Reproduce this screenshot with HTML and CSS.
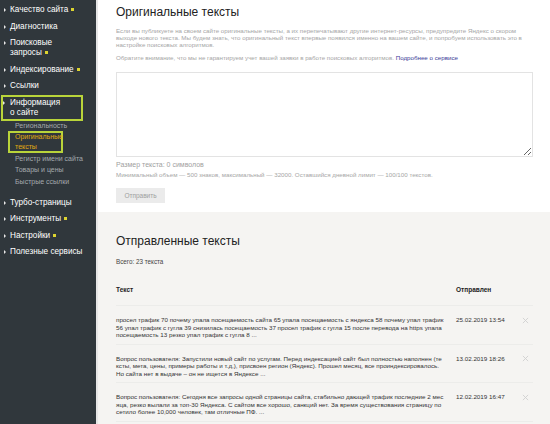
FILE: index.html
```html
<!DOCTYPE html>
<html lang="ru">
<head>
<meta charset="utf-8">
<title>Оригинальные тексты</title>
<link rel="stylesheet" href="styles.css">
</head>
<body>
<div class="app">
  <nav class="side">
    <ul class="menu">
      <li class="item"><div class="lbl">Качество сайта<span class="dot"></span></div></li>
      <li class="item"><div class="lbl">Диагностика</div></li>
      <li class="item"><div class="lbl">Поисковые<br>запросы<span class="dot"></span></div></li>
      <li class="item"><div class="lbl">Индексирование<span class="dot"></span></div></li>
      <li class="item"><div class="lbl">Ссылки</div></li>
      <li class="item">
        <div class="lbl hl">Информация<br>о сайте</div>
        <ul class="sub">
          <li class="sub-item">Региональность</li>
          <li class="sub-item active hl2">Оригинальные<br>тексты</li>
          <li class="sub-item">Регистр имени сайта</li>
          <li class="sub-item">Товары и цены</li>
          <li class="sub-item">Быстрые ссылки</li>
        </ul>
      </li>
      <li class="item"><div class="lbl">Турбо-страницы</div></li>
      <li class="item"><div class="lbl">Инструменты<span class="dot"></span></div></li>
      <li class="item"><div class="lbl">Настройки<span class="dot"></span></div></li>
      <li class="item"><div class="lbl">Полезные сервисы</div></li>
    </ul>
  </nav>
  <main class="main">
    <section class="top">
      <h1 class="title">Оригинальные тексты</h1>
      <p class="intro">Если вы публикуете на своем сайте оригинальные тексты, а их перепечатывают другие интернет-ресурсы, предупредите Яндекс о скором выходе нового текста. Мы будем знать, что оригинальный текст впервые появился именно на вашем сайте, и попробуем использовать это в настройке поисковых алгоритмов.</p>
      <p class="note">Обратите внимание, что мы не гарантируем учет вашей заявки в работе поисковых алгоритмов. <a class="link" href="#">Подробнее о сервисе</a></p>
      <textarea class="field"></textarea>
      <div class="size">Размер текста: 0 символов</div>
      <div class="limit">Минимальный объем — 500 знаков, максимальный — 32000. Оставшийся дневной лимит — 100/100 текстов.</div>
      <button class="btn" type="button">Отправить</button>
    </section>
    <section class="sent">
      <h2 class="title">Отправленные тексты</h2>
      <div class="total">Всего: 23 текста</div>
      <div class="table">
        <div class="row head">
          <div class="c-text">Текст</div>
          <div class="c-date">Отправлен</div>
          <div class="c-x"></div>
        </div>
        <div class="row">
          <div class="c-text">просел трафик 70 почему упала посещаемость сайта 65 упала посещаемость с яндекса 58 почему упал трафик 56 упал трафик с гугла 39 снизилась посещаемость 37 просел трафик с гугла 15 после перевода на https упала посещаемость 13 резко упал трафик с гугла 8 ...</div>
          <div class="c-date">25.02.2019 13:54</div>
          <div class="c-x"><svg class="x" viewBox="0 0 8 8"><path d="M1 1L7 7M7 1L1 7"/></svg></div>
        </div>
        <div class="row">
          <div class="c-text">Вопрос пользователя: Запустили новый сайт по услугам. Перед индексацией сайт был полностью наполнен (тексты, мета, цены, примеры работы и т.д.), присвоен регион (Яндекс). Прошел месяц, все проиндексировалось. Но сайта нет в выдаче – он не ищется в Яндексе ...</div>
          <div class="c-date">13.02.2019 18:26</div>
          <div class="c-x"><svg class="x" viewBox="0 0 8 8"><path d="M1 1L7 7M7 1L1 7"/></svg></div>
        </div>
        <div class="row">
          <div class="c-text">Вопрос пользователя: Сегодня все запросы одной страницы сайта, стабильно дающей трафик последние 2 месяца, резко вылали за топ-30 Яндекса. С сайтом все хорошо, санкций нет. За время существования страницу посетило более 10,000 человек, там отличные ПФ. ...</div>
          <div class="c-date">12.02.2019 16:47</div>
          <div class="c-x"><svg class="x" viewBox="0 0 8 8"><path d="M1 1L7 7M7 1L1 7"/></svg></div>
        </div>
      </div>
    </section>
  </main>
</div>
</body>
</html>
```
FILE: styles.css
```css
* { box-sizing: border-box; }
html, body { margin: 0; padding: 0; }
body {
  width: 550px;
  height: 424px;
  overflow: hidden;
  font-family: "Liberation Sans", Arial, sans-serif;
  background: #fff;
}
.app { display: flex; height: 424px; }

/* sidebar */
.side {
  width: 96px;
  flex: 0 0 96px;
  background: #30373c;
  padding-top: 2px;
}
.menu, .sub { list-style: none; margin: 0; padding: 0; }
.lbl {
  position: relative;
  padding: 3px 0 3.5px 10px;
  font-size: 8.2px;
  line-height: 10px;
  color: #fff;
}
.lbl::before {
  content: "";
  position: absolute;
  left: 4px;
  top: 6px;
  border-left: 2.5px solid #e8e8e8;
  border-top: 2px solid transparent;
  border-bottom: 2px solid transparent;
}
.dot {
  display: inline-block;
  width: 3px;
  height: 3px;
  margin-left: 3px;
  background: #dcd430;
  vertical-align: 1px;
}
.hl {
  width: 82px;
  margin-left: 1px;
  padding-left: 9px;
  box-shadow: inset 0 0 0 2px #b9d43a;
}
.hl::before { left: 2px; }
.sub { padding: 0 0 7.5px; margin-top: -1.2px; }
.sub-item {
  padding: 0.75px 0 0.75px 15px;
  font-size: 7px;
  line-height: 10px;
  color: #a4a9ad;
}
.sub-item.active { color: #e0aa10; }
.hl2 {
  width: 55px;
  margin-left: 8px;
  padding-left: 7px;
  box-shadow: inset 0 0 0 2px #b9d43a;
}

/* main */
.main {
  flex: 1;
  border-left: 2px solid #e6e6e6;
  display: flex;
  flex-direction: column;
}
.top {
  padding: 5px 17px 9px 18px;
  background: #fff;
}
.title {
  margin: 0;
  font-size: 12px;
  line-height: 14px;
  font-weight: normal;
  color: #222;
}
.intro, .note {
  margin: 7.5px 0 0;
  font-size: 6.2px;
  line-height: 7.2px;
  color: #a6a6a6;
}
.note { margin-top: 6.3px; }
.link { color: #3b3a97; text-decoration: none; }
.field {
  display: block;
  width: 100%;
  height: 85px;
  margin-top: 10.4px;
  border: 1px solid #e3e3e3;
  resize: vertical;
  background: #fff;
}
.size {
  margin-top: 2.5px;
  font-size: 7px;
  line-height: 9px;
  color: #a0a0a0;
}
.limit {
  margin-top: 2.5px;
  font-size: 6.2px;
  line-height: 8px;
  color: #a6a6a6;
}
.btn {
  display: block;
  margin-top: 9px;
  width: 49px;
  height: 15px;
  padding: 0;
  border: 0;
  background: #ebebeb;
  color: #a0a0a0;
  font-family: inherit;
  font-size: 6.5px;
}
.sent {
  flex: 1;
  background: #f5f4f2;
  padding: 22px 17px 0 18px;
}
.total {
  margin-top: 10px;
  font-size: 6.3px;
  line-height: 8px;
  color: #444;
}
.table { margin-top: 20px; }
.row {
  display: grid;
  grid-template-columns: 328px 54px 10px;
  column-gap: 12px;
  padding: 10px 0 5px;
  border-bottom: 1px solid #ececea;
  font-size: 6.25px;
  line-height: 7.5px;
  color: #333;
}
.row .c-text { word-break: break-all; }
.row.head {
  padding: 0 0 11px;
  font-weight: bold;
  font-size: 6.5px;
  line-height: 8px;
  color: #222;
}
.x {
  display: block;
  width: 7px;
  height: 7px;
  margin-top: 0.5px;
  stroke: #cfcfcf;
  stroke-width: 1;
  fill: none;
}
```
